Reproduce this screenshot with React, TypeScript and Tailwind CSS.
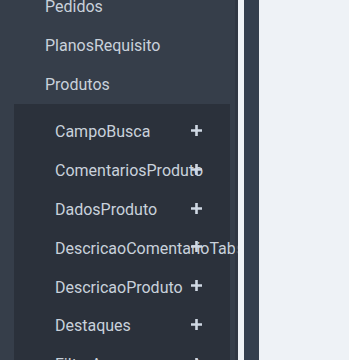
import React from 'react'

const topItems = ['Pedidos', 'PlanosRequisito', 'Produtos']
const subItems = [
  'CampoBusca',
  'ComentariosProduto',
  'DadosProduto',
  'DescricaoComentarioTabs',
  'DescricaoProduto',
  'Destaques',
  'FiltroArmazenamento',
]

const Plus = () => (
  <svg width="13" height="13" viewBox="0 0 13 13" className="absolute left-[176px] top-[11px]">
    <path d="M6.5 1v11M1 6.5h11" stroke="#cfd8e3" strokeWidth="2.6" />
  </svg>
)

const App = () => {
  return (
    <div className="flex h-[360px] w-[349px] overflow-hidden bg-[#eef2f6]" style={{ fontFamily: 'Roboto, sans-serif' }}>
      <div className="relative w-[238px] shrink-0 overflow-hidden bg-[#363e4a] text-[16px] text-[#c9d1db]">
        <div className="-mt-[13px]">
          {topItems.map((item) => (
            <div key={item} className="flex h-[39px] items-center whitespace-nowrap pl-[45px]">
              {item}
            </div>
          ))}
          <div className="ml-[14px] w-[216px] bg-[#2b313b] pt-[9px]">
            {subItems.map((item) => (
              <div key={item} className="relative flex h-[38.8px] items-center whitespace-nowrap pl-[41px]">
                <span>{item}</span>
                <Plus />
              </div>
            ))}
          </div>
        </div>
        <div className="absolute right-0 top-0 h-full w-[3px] bg-[#2f3641]/80" />
      </div>
      <div className="w-[6px] shrink-0 bg-[#eef2f6]" />
      <div className="w-[15px] shrink-0 bg-[#343f4e]" />
      <div className="flex-1 bg-[#eef2f6]" />
    </div>
  )
}

export default App
